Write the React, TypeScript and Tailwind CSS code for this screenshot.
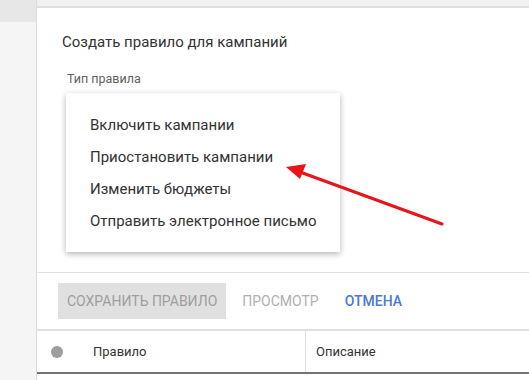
import React from 'react';

const ruleTypes = [
  'Включить кампании',
  'Приостановить кампании',
  'Изменить бюджеты',
  'Отправить электронное письмо',
];

const App: React.FC = () => {
  return (
    <div
      className="relative h-[380px] w-[529px] overflow-hidden bg-white flex"
      style={{ fontFamily: 'Roboto, "Noto Sans", sans-serif' }}
    >
      {/* Left rail */}
      <div className="w-[37px] flex flex-col border-r border-[#dcdcdc]">
        <div className="h-[22px] bg-[#e7e7e7]"></div>
        <div className="flex-1 bg-[#f5f5f5]"></div>
      </div>

      {/* Main */}
      <div className="flex-1 flex flex-col">
        <div className="h-[8px] bg-[#f1f1f3] border-b-2 border-[#dedede]"></div>

        <div className="h-[264px] flex flex-col">
          <h2 className="mt-[24px] ml-[25px] text-[15px] leading-[20px] text-[#333]">
            Создать правило для кампаний
          </h2>
          <div className="mt-[19px] ml-[30px] text-[12.5px] leading-[16px] text-[#5f5f5f]">Тип правила</div>

          {/* Open dropdown */}
          <ul className="mt-[6px] ml-[29px] w-[274px] bg-white pt-[16px] pb-[15px] shadow-[0_2px_6px_rgba(0,0,0,0.3)]">
            {ruleTypes.map((t) => (
              <li key={t} className="h-8 flex items-center pl-[24px] text-[15px] text-[#333]">
                {t}
              </li>
            ))}
          </ul>
        </div>

        <div className="h-[57px] border-t border-[#e0e0e0] flex items-center pl-[21px] gap-[16px]">
          <button className="h-[36px] px-[9px] bg-[#e0e0e0] text-[14px] text-[#9e9e9e]">
            СОХРАНИТЬ ПРАВИЛО
          </button>
          <button className="h-[36px] px-0 text-[14px] text-[#b0b0b0]">ПРОСМОТР</button>
          <button className="h-[36px] ml-[10px] text-[14px] font-medium text-[#4a78d4]">ОТМЕНА</button>
        </div>

        <div className="h-[45px] border-t-2 border-b-2 border-t-[#e0e0e0] border-b-[#757575] flex text-[13px] text-[#333]">
          <div className="w-[269px] flex items-center border-r border-[#e0e0e0]">
            <span className="ml-[14px] w-[12px] h-[12px] rounded-full bg-[#9e9e9e]"></span>
            <span className="ml-[30px]">Правило</span>
          </div>
          <div className="flex items-center pl-[10px]">Описание</div>
        </div>
      </div>

      {/* Annotation arrow */}
      <svg className="absolute left-0 top-0 pointer-events-none" width="529" height="380">
        <line x1="442" y1="224" x2="300" y2="172" stroke="#e8141a" strokeWidth="3" strokeLinecap="round" />
        <polygon points="286,167 306,164 300,179" fill="#e8141a" />
      </svg>
    </div>
  );
};

export default App;
